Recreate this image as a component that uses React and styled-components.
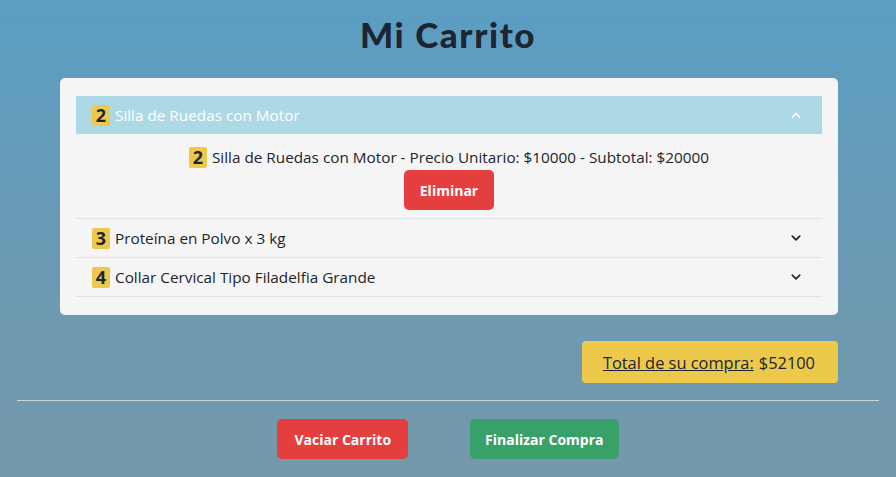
import React from "react";
import styled, { createGlobalStyle } from "styled-components";

const GlobalStyle = createGlobalStyle`
  html, body {
    margin: 0;
    min-height: 100%;
  }
  body {
    font-family: "Open Sans", "Noto Sans", sans-serif;
    background: linear-gradient(180deg, #5a9ec3 0%, #6c9ab3 55%, #7498ab 100%);
    min-height: 477px;
    color: #212529;
  }
`;

const Page = styled.div`
  min-height: 477px;
  padding: 13px 17px 0;
  box-sizing: border-box;
`;

const Title = styled.h1`
  margin: 0 0 23px;
  text-align: center;
  font-family: Lato, "DejaVu Sans", sans-serif;
  font-weight: 900;
  font-size: 35px;
  letter-spacing: 1.6px;
  line-height: 42px;
  color: #1d2433;
`;

const Card = styled.div`
  margin: 0 41px 0 43px;
  background: #f5f5f5;
  border-radius: 5px;
  padding: 18px 16px 18px;
`;

const Item = styled.div`
  border-bottom: 1px solid #dde3ec;
`;

const ItemHeader = styled.div`
  display: flex;
  align-items: center;
  height: 38px;
  padding: 0 16px;
  gap: 5px;
  background: ${(p) => (p.$open ? "#add8e6" : "transparent")};
  color: ${(p) => (p.$open ? "#ffffff" : "#212529")};
  font-size: 15.3px;
`;

const Name = styled.span`
  flex: 1;
`;

const Badge = styled.span`
  display: inline-flex;
  align-items: center;
  justify-content: center;
  width: 18px;
  height: 21px;
  background: #ecc94b;
  color: #1d2433;
  border-radius: 2px;
  font-weight: 700;
  font-size: 18px;
`;

const Chevron = styled.svg`
  width: 12px;
  height: 12px;
  margin-right: 4px;
`;

const ItemBody = styled.div`
  display: flex;
  flex-direction: column;
  align-items: center;
  padding: 12px 0 8px;
  gap: 2px;
`;

const Line = styled.div`
  display: flex;
  align-items: center;
  gap: 5px;
  height: 22px;
  font-size: 15.3px;
`;

const Button = styled.button`
  border: none;
  border-radius: 5px;
  height: 40px;
  padding: 0 ${(p) => p.$pad || 16}px;
  font-family: "Open Sans", "Noto Sans", sans-serif;
  font-weight: 700;
  font-size: 14px;
  color: #ffffff;
  background: ${(p) => p.$bg};
`;

const TotalRow = styled.div`
  display: flex;
  justify-content: flex-end;
  margin: 26px 41px 0 0;
`;

const Total = styled.div`
  background: #ecc94b;
  border-radius: 4px;
  height: 42px;
  padding: 0 23px 0 21px;
  display: flex;
  align-items: center;
  font-size: 16.4px;
  color: #1d2433;
  gap: 5px;
`;

const TotalLabel = styled.span`
  text-decoration: underline;
`;

const Rule = styled.hr`
  margin: 17px 0 18px;
  border: none;
  border-top: 1px solid #c9d3dc;
`;

const Actions = styled.div`
  display: flex;
  justify-content: center;
  gap: 62px;
`;

const ChevronIcon = ({ up, color }) => (
  <Chevron viewBox="0 0 16 16">
    <path
      d={up ? "M3 11l5-5 5 5" : "M3 5.5l5 5 5-5"}
      fill="none"
      stroke={color}
      strokeWidth="2.2"
      strokeLinecap="round"
      strokeLinejoin="round"
    />
  </Chevron>
);

const items = [
  { qty: 2, name: "Silla de Ruedas con Motor", price: 10000, open: true },
  { qty: 3, name: "Proteína en Polvo x 3 kg", price: 12000 },
  { qty: 4, name: "Collar Cervical Tipo Filadelfia Grande", price: 1025 },
];

export default function App() {
  return (
    <Page>
      <GlobalStyle />
      <Title>Mi Carrito</Title>
      <Card>
        {items.map((it) => (
          <Item key={it.name}>
            <ItemHeader $open={it.open}>
              <Badge>{it.qty}</Badge>
              <Name>{it.name}</Name>
              <ChevronIcon up={it.open} color={it.open ? "#ffffff" : "#212529"} />
            </ItemHeader>
            {it.open && (
              <ItemBody>
                <Line>
                  <Badge>{it.qty}</Badge>
                  {it.name} - Precio Unitario: ${it.price} - Subtotal: ${it.price * it.qty}
                </Line>
                <Button $bg="#e53e3e">Eliminar</Button>
              </ItemBody>
            )}
          </Item>
        ))}
      </Card>
      <TotalRow>
        <Total>
          <TotalLabel>Total de su compra:</TotalLabel> $52100
        </Total>
      </TotalRow>
      <Rule />
      <Actions>
        <Button $bg="#e53e3e" $pad={17}>Vaciar Carrito</Button>
        <Button $bg="#38a169" $pad={15}>Finalizar Compra</Button>
      </Actions>
    </Page>
  );
}
